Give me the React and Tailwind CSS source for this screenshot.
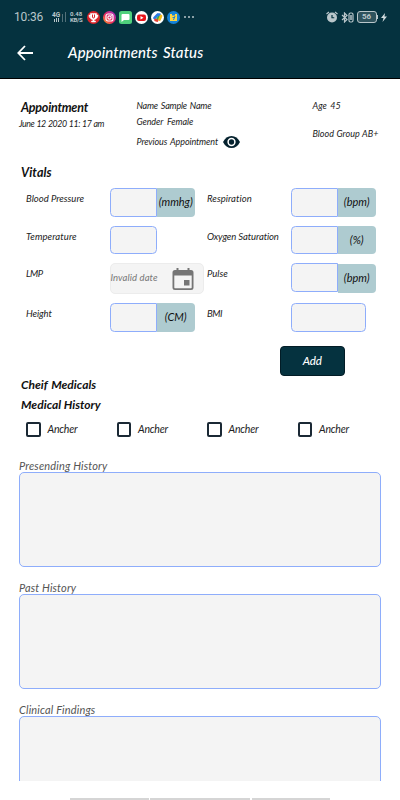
import React from "react";

const vitalsLeft = [
  { label: "Blood Pressure", unit: "(mmhg)", row: "h-[37.5px]", labelClass: "tracking-[0px]" },
  { label: "Temperature", row: "h-[37.5px]", labelClass: "tracking-[0.1px]" },
  { label: "LMP", date: true, row: "h-[40px]", labelClass: "tracking-[-0.5px]" },
  { label: "Height", unit: "(CM)", row: "h-[29px]", labelClass: "tracking-[-0.1px]" },
];

const vitalsRight = [
  { label: "Respiration", unit: "(bpm)", row: "h-[37.5px]", labelClass: "tracking-[0.05px]" },
  { label: "Oxygen Saturation", unit: "(%)", row: "h-[37.5px]", labelClass: "tracking-[-0.1px]" },
  { label: "Pulse", unit: "(bpm)", row: "h-[40px]", unitClass: "mt-px", labelClass: "tracking-[0px]" },
  { label: "BMI", wide: true, row: "h-[29px]", labelClass: "tracking-[-0.4px]" },
];

function StatusBar() {
  return (
    <div className="flex h-[34px] items-center pl-[14px] pr-[13px] text-[#b9c6ca]">
      <span className="w-[36px] font-[Roboto,sans-serif] text-[12px] leading-[14px] tracking-[-0.15px] whitespace-nowrap">10:36</span>
      <div className="flex w-[20px] items-end gap-[2px] pl-[2px]">
        <div className="flex w-[8px] flex-col items-center font-[Roboto,sans-serif] text-[6.5px] leading-[6px] font-bold">
          <span>4G</span>
          <span className="flex h-[4px] items-end gap-px">
            <i className="h-[3px] w-px bg-[#b9c6ca]" />
            <i className="h-[4px] w-px bg-[#b9c6ca]" />
            <i className="h-[4px] w-px bg-[#b9c6ca]" />
          </span>
        </div>
        <i className="h-[8px] w-px bg-[#527079]" />
        <i className="h-[10px] w-px bg-[#527079]" />
      </div>
      <div className="flex w-[14px] flex-col font-[Roboto,sans-serif] text-[6px] leading-[6px] font-bold">
        <span>0.48</span>
        <span className="tracking-[-0.3px]">KB/S</span>
      </div>
      <div className="ml-[3px] flex items-center gap-[3px]">
        <svg className="size-[13px]" viewBox="0 0 26 26">
          <circle cx="13" cy="13" r="13" fill="#d9242a" />
          <path d="M7 5h12v7a6 6 0 0 1-5 6v2h3v2H9v-2h3v-2a6 6 0 0 1-5-6zM7 8H4c0 4 1 6 4 7M19 8h3c0 4-1 6-4 7" fill="#fff" stroke="#fff" strokeWidth="1" />
          <path d="M11 7v5a2 2 0 0 0 4 0V7" fill="none" stroke="#d9242a" strokeWidth="2" />
        </svg>
        <svg className="size-[13px]" viewBox="0 0 26 26">
          <defs>
            <linearGradient id="ig" x1="0" y1="1" x2="1" y2="0">
              <stop offset="0" stopColor="#ffb52c" />
              <stop offset=".4" stopColor="#ee2a55" />
              <stop offset="1" stopColor="#9b2fd0" />
            </linearGradient>
          </defs>
          <circle cx="13" cy="13" r="13" fill="url(#ig)" />
          <rect x="6" y="6" width="14" height="14" rx="4" fill="none" stroke="#fff" strokeWidth="2.4" />
          <circle cx="13" cy="13" r="3.3" fill="none" stroke="#fff" strokeWidth="2.2" />
          <circle cx="17" cy="9" r="1" fill="#fff" />
        </svg>
        <svg className="size-[13px]" viewBox="0 0 26 26">
          <rect width="26" height="26" rx="5" fill="#4fd07c" />
          <path d="M7 6h12q2 0 2 2v8q0 2-2 2h-9l-5 4V8q0-2 2-2z" fill="#fff" />
        </svg>
        <svg className="size-[13px]" viewBox="0 0 26 26">
          <circle cx="13" cy="13" r="13" fill="#fff" />
          <rect x="4" y="7" width="18" height="13" rx="4" fill="#e8141a" />
          <path d="M11 10l6 3.5-6 3.5z" fill="#fff" />
        </svg>
        <svg className="size-[13px]" viewBox="0 0 26 26">
          <circle cx="13" cy="13" r="13" fill="#fff" />
          <g fill="none" strokeLinecap="round" strokeWidth="5.500">
            <path d="M7 14l6-6" stroke="#2c7be5" />
            <path d="M13 16l4-5" stroke="#32a853" />
            <path d="M14 7h3" stroke="#2c7be5" />
            <path d="M20 10l-3 7" stroke="#f6bb16" />
            <path d="M9 18l3 1" stroke="#e64034" />
          </g>
        </svg>
        <svg className="size-[13px]" viewBox="0 0 26 26">
          <circle cx="13" cy="13" r="13" fill="#1683d8" />
          <path d="M6 6h14v14H6z" fill="#ffd641" />
          <path d="M10 6h6v3h-6z" fill="#1683d8" />
          <path d="M16 10l-3 8M11 13h5" fill="none" stroke="#1683d8" strokeWidth="2" />
        </svg>
      </div>
      <div className="ml-[4px] flex gap-[2.5px]">
        <i className="size-[1.5px] rounded-full bg-[#b9c6ca]" />
        <i className="size-[1.5px] rounded-full bg-[#b9c6ca]" />
        <i className="size-[1.5px] rounded-full bg-[#b9c6ca]" />
      </div>
      <div className="ml-auto flex items-center">
        <svg className="mr-[3px] size-[12px]" viewBox="0 0 24 24">
          <circle cx="12" cy="13" r="10" fill="#b9c6ca" />
          <path d="M1 6l5-4M23 6l-5-4" stroke="#b9c6ca" strokeWidth="2.4" />
          <path d="M12 8v5.500h4.500" stroke="#05323f" strokeWidth="2.4" fill="none" />
        </svg>
        <svg className="mr-[3px] h-[11px] w-[13px]" viewBox="0 0 26 22" fill="none" stroke="#b9c6ca" strokeWidth="2.400">
          <path d="M2 6l10 9-5 5V2l5 5-10 9" />
          <rect x="16" y="2" width="8" height="18" rx="3" />
          <path d="M20 6v10" strokeWidth="3" />
        </svg>
        <div className="flex h-[12px] w-[20px] items-center justify-center rounded-[3px] border border-[#b9c6ca] bg-[#2f535d] font-[Roboto,sans-serif] text-[8px] leading-none font-bold">56</div>
        <i className="h-[4px] w-[1.500px] bg-[#b9c6ca]" />
        <svg className="ml-[3px] h-[9px] w-[6px]" viewBox="0 0 12 18">
          <path d="M8 0L0 10h5l-2 8 9-11H7z" fill="#d2dcdf" />
        </svg>
      </div>
    </div>
  );
}

function CalendarIcon() {
  return (
    <svg className="h-[22px] w-[22px]" viewBox="0 0 22 22" fill="#757575">
      <path fillRule="evenodd" d="M3 2h1.500V0h2v2h9V0h2v2H19a2.500 2.500 0 0 1 2.500 2.500v15A2.500 2.500 0 0 1 19 22H3a2.500 2.500 0 0 1-2.500-2.500v-15A2.500 2.500 0 0 1 3 2zM2.300 7.500v12q0 .7.700.7h16q.7 0 .7-.7v-12z" />
      <rect x="12" y="12" width="5.500" height="5.500" />
    </svg>
  );
}

function Field({ item }) {
  if (item.date) {
    return (
      <div className="flex h-[31px] w-[94.500px] items-center justify-between rounded-[5px] border border-[#ececec] bg-[#f4f4f4] pr-[9.500px]">
        <span className="text-[9.5px] tracking-[0.1px] whitespace-nowrap text-[#777]">Invalid date</span>
        <CalendarIcon />
      </div>
    );
  }
  if (item.wide) {
    return <div className="h-[28.500px] w-[75.500px] rounded-[4.500px] border border-[#8eadfb] bg-[#f4f4f4]" />;
  }
  if (!item.unit) {
    return <div className="h-[28.500px] w-[47.500px] rounded-[4.500px] border border-[#8eadfb] bg-[#f4f4f4]" />;
  }
  return (
    <div className="flex h-[28.500px]">
      <div className="h-[28.500px] w-[47px] rounded-l-[4.500px] border border-[#8eadfb] bg-[#f4f4f4]" />
      <div className={`flex h-[28.500px] w-[38.500px] items-center justify-center rounded-r-[4px] bg-[#aecbd0] text-[11px] whitespace-nowrap text-[#111] ${item.unitClass || ""}`}>
        {item.unit}
      </div>
    </div>
  );
}

function VitalsColumn({ items, labelWidth }) {
  return (
    <div className="flex flex-col">
      {items.map((item) => (
        <div key={item.label} className={`flex items-start ${item.row}`}>
          <span className={`${labelWidth} mt-[4px] text-[9.5px] leading-[14px] whitespace-nowrap ${item.labelClass}`}>{item.label}</span>
          <Field item={item} />
        </div>
      ))}
    </div>
  );
}

function HistoryArea({ title }) {
  return (
    <section className="h-[122.200px] shrink-0 px-[19px]">
      <h3 className="h-[14.500px] text-[11px] leading-[15.500px] tracking-[0.15px] text-[#555]">{title}</h3>
      <div className="h-[94.500px] rounded-[5px] border border-[#8eadfb] bg-[#f4f4f4]" />
    </section>
  );
}

export default function App() {
  return (
    <div className="flex h-[800px] w-[400px] flex-col overflow-hidden bg-white font-[Lato,'Noto_Sans',sans-serif] text-[#222] italic">
      <header className="h-[79px] shrink-0 border-b border-black bg-[#05323f] not-italic">
        <StatusBar />
        <div className="flex h-[37px] items-center pl-[17px]">
          <svg className="h-[16px] w-[16px]" viewBox="0 0 16 16" fill="none" stroke="#fff" strokeWidth="1.800">
            <path d="M8 1L1.300 8 8 15M1.300 8H16" />
          </svg>
          <h1 className="ml-[35px] text-[15px] font-medium tracking-[0.1px] [word-spacing:2px] whitespace-nowrap text-white italic">Appointments Status</h1>
        </div>
      </header>

      <main className="flex h-[702px] shrink-0 flex-col overflow-hidden">
        <section className="flex h-[86px] shrink-0 pt-[20px] pl-[19px] text-[9px] leading-[14px] whitespace-nowrap">
          <div className="w-[117.500px]">
            <h2 className="mt-px ml-[2px] text-[12.5px] leading-[16px] font-bold tracking-[-0.25px] text-[#111]">Appointment</h2>
            <p className="mt-[1px] text-[8.800px] tracking-[-0.42px] [word-spacing:0.5px]">June 12 2020 11: 17 am</p>
          </div>
          <div className="w-[176px]">
            <p className="tracking-[-0.2px] [word-spacing:1px]">Name Sample Name</p>
            <p className="mt-[1.500px] tracking-[-0.1px] [word-spacing:2px]">Gender Female</p>
            <div className="mt-[6px] flex items-center">
              <span className="w-[86.500px] tracking-[-0.1px] [word-spacing:1px]">Previous Appointment</span>
              <svg className="h-[12px] w-[17px]" viewBox="0 0 17 12">
                <path d="M0 6Q3 0 8.500 0T17 6Q14 12 8.500 12T0 6z" fill="#05222e" />
                <circle cx="8.500" cy="6" r="3.400" fill="none" stroke="#fff" strokeWidth="1.500" />
              </svg>
            </div>
          </div>
          <div>
            <p className="[word-spacing:1.500px]">Age 45</p>
            <p className="mt-[14px] [word-spacing:0.5px]">Blood Group AB+</p>
          </div>
        </section>

        <h2 className="h-[23px] shrink-0 pl-[21px] text-[12.5px] leading-[16px] font-bold tracking-[0.1px] text-[#111]">Vitals</h2>
        <section className="flex h-[158px] shrink-0 pl-[26px]">
          <div className="w-[181px]">
            <VitalsColumn items={vitalsLeft} labelWidth="w-[83.500px]" />
          </div>
          <VitalsColumn items={vitalsRight} labelWidth="w-[83.500px]" />
        </section>

        <button className="ml-[279.500px] h-[30px] w-[65.500px] shrink-0 rounded-[4px] border border-[#021c26] bg-[#05323f] text-[11.5px] font-medium tracking-[-0.2px] text-white italic">Add</button>
        <div className="flex h-[39px] shrink-0 flex-col pl-[21px] text-[12px] leading-[19.500px] font-bold text-[#111]">
          <h2 className="-mt-px [word-spacing:1px]">Cheif Medicals</h2>
          <h2>Medical History</h2>
        </div>
        <div className="mt-[2.500px] flex h-[24px] shrink-0 items-center pl-[26px]">
          {[0, 1, 2, 3].map((n) => (
            <label key={n} className="flex w-[90.500px] items-center gap-[7px] text-[10.5px] tracking-[-0.2px]">
              <i className="size-[14.500px] rounded-[2px] border-[2px] border-[#1b2935]" />
              Ancher
            </label>
          ))}
        </div>
        <div className="mt-[16px] flex shrink-0 flex-col">
          <HistoryArea title="Presending History" />
          <HistoryArea title="Past History" />
          <HistoryArea title="Clinical Findings" />
        </div>
      </main>

      <footer className="mt-auto flex h-[2px] shrink-0 justify-center gap-[1.500px]">
        <i className="w-[78.500px] bg-[#d5d5d5]" />
        <i className="w-[100px] bg-[#d5d5d5]" />
        <i className="w-[78.500px] bg-[#d5d5d5]" />
      </footer>
    </div>
  );
}
